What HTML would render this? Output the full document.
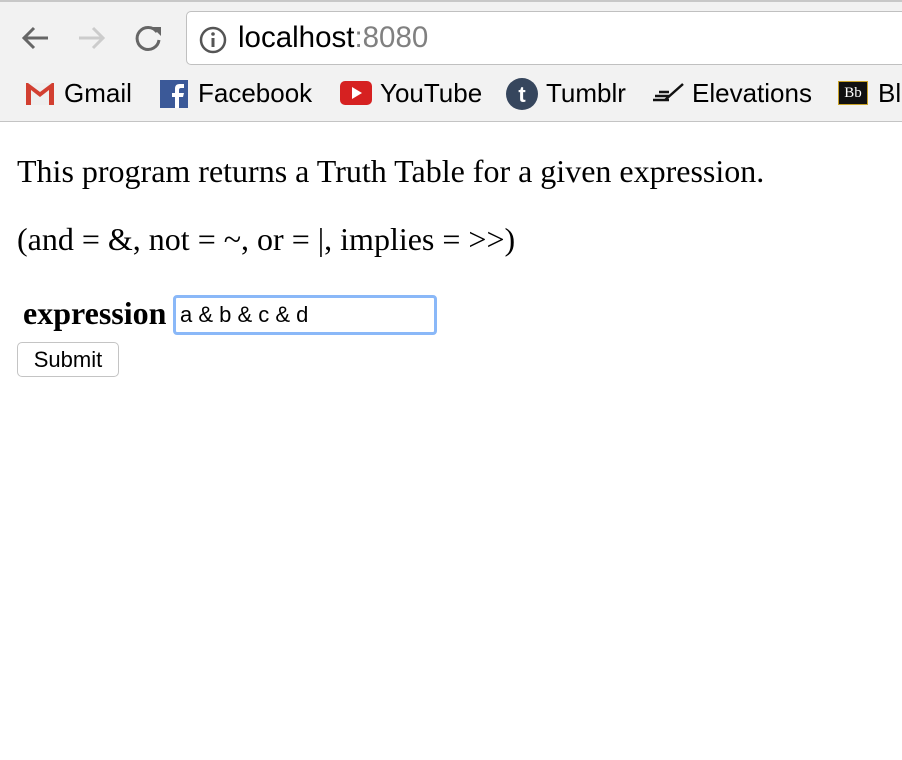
<!DOCTYPE html>
<html><head><style>
body{margin:0;width:902px;height:760px;background:#fff;overflow:hidden;font-family:"Liberation Serif",serif;position:relative}
.chrome{position:absolute;left:0;top:0;width:902px;height:121px;background:#f2f2f2;border-bottom:1px solid #c4c4c4}
.tabline{position:absolute;left:0;top:0;width:902px;height:2px;background:#c8c8c8}
.addr{position:absolute;left:186px;top:11px;width:730px;height:52px;background:#fff;border:1px solid #c0c0c0;border-radius:5px}
.url{position:absolute;left:238px;top:21px;font:29.5px "Liberation Sans",sans-serif;color:#000}
.url span{color:#808080}
.bm{position:absolute;top:78px;font:26px "Liberation Sans",sans-serif;color:#000}
.t{position:absolute;left:17px;font-size:32px;color:#000;white-space:nowrap}
</style></head><body>
<div class="chrome">
<div class="tabline"></div>
<svg style="position:absolute;left:20px;top:24px" width="32" height="28" viewBox="0 0 32 28"><path d="M28 14H5M14 4L4 14l10 10" stroke="#666" stroke-width="3" fill="none"/></svg>
<svg style="position:absolute;left:76px;top:24px" width="32" height="28" viewBox="0 0 32 28"><path d="M3 14h23M17 4l10 10-10 10" stroke="#ccc" stroke-width="3" fill="none"/></svg>
<svg style="position:absolute;left:133px;top:23px" width="32" height="30" viewBox="0 0 32 30"><path d="M24 9A11 11 0 1 0 26 17" stroke="#666" stroke-width="3" fill="none"/><path d="M19 4h9v9z" fill="#666"/></svg>
<div class="addr"></div>
<svg style="position:absolute;left:199px;top:26px" width="28" height="28" viewBox="0 0 28 28"><circle cx="14" cy="14" r="12" stroke="#555" stroke-width="2.5" fill="none"/><rect x="12.5" y="12" width="3" height="9" fill="#555"/><circle cx="14" cy="8" r="1.8" fill="#555"/></svg>
<div class="url">localhost<span>:8080</span></div>
<svg style="position:absolute;left:26px;top:83px" width="28" height="22" viewBox="0 0 28 22"><rect x="0" y="0" width="28" height="22" fill="#eee"/><path d="M0 0v22h5V7l9 7 9-7v15h5V0h-2L14 9 2 0z" fill="#d23f31"/></svg>
<div class="bm" style="left:64px">Gmail</div>
<svg style="position:absolute;left:160px;top:80px" width="28" height="28" viewBox="0 0 28 28"><rect width="28" height="28" fill="#3b5998"/><path d="M19 28V17h4l1-4h-5v-3c0-1 .5-2 2-2h3V4h-4c-4 0-5 2-5 5v4h-3v4h3v11z" fill="#fff"/></svg>
<div class="bm" style="left:198px">Facebook</div>
<svg style="position:absolute;left:340px;top:81px" width="32" height="24" viewBox="0 0 32 24"><rect width="32" height="24" rx="5" fill="#d62121"/><path d="M12 6v12l10-6z" fill="#fff"/></svg>
<div class="bm" style="left:380px">YouTube</div>
<svg style="position:absolute;left:506px;top:78px" width="32" height="32" viewBox="0 0 32 32"><circle cx="16" cy="16" r="16" fill="#36465d"/><text x="16" y="24" font-family="Liberation Sans" font-weight="bold" font-size="22" fill="#fff" text-anchor="middle">t</text></svg>
<div class="bm" style="left:546px">Tumblr</div>
<svg style="position:absolute;left:651px;top:82px" width="34" height="22" viewBox="0 0 34 22"><path d="M2 18h16M4 14h14M8 10h10M14 18L32 2" stroke="#111" stroke-width="2.5" fill="none"/></svg>
<div class="bm" style="left:692px">Elevations</div>
<div style="position:absolute;left:838px;top:81px;width:28px;height:22px;background:#111;border:1px solid #c9a227;color:#fff;font:15px 'Liberation Serif',serif;text-align:center;line-height:22px">Bb</div>
<div class="bm" style="left:878px">Bl</div>
</div>
<div class="t" style="top:153px">This program returns a Truth Table for a given expression.</div>
<div class="t" style="top:221px">(and = &amp;, not = ~, or = |, implies = &gt;&gt;)</div>
<div class="t" style="top:295px;left:23px;font-weight:bold">expression</div>
<div style="position:absolute;left:173px;top:295px;width:258px;height:34px;border:3px solid #8ab8f8;border-radius:4px;background:#fff"></div>
<div style="position:absolute;left:180px;top:302px;font:22px 'Liberation Sans',sans-serif">a &amp; b &amp; c &amp; d</div>
<div style="position:absolute;left:17px;top:342px;width:100px;height:33px;border:1px solid #c4c4c4;border-radius:5px;background:#fff;font:22px 'Liberation Sans',sans-serif;text-align:center;line-height:33px">Submit</div>
</body></html>
